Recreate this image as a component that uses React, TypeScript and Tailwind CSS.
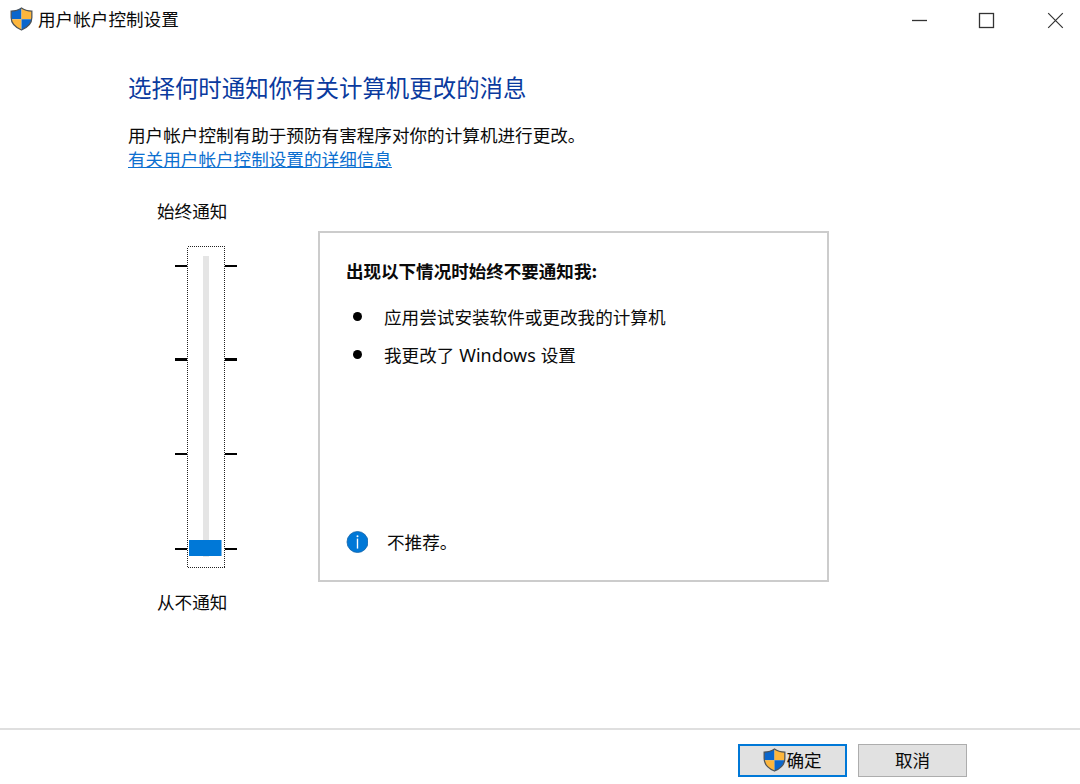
import React from "react";

function Shield({ className = "" }: { className?: string }) {
  return (
    <svg viewBox="0 0 24 25" className={`h-6 w-[23px] shrink-0 ${className}`} aria-hidden="true">
      <defs>
        <clipPath id="shield-shape">
          <path d="M12 1C9 3.2 5 4.1 1.2 4.2V11C1.2 17.2 6 21.5 12 24C18 21.5 22.8 17.2 22.8 11V4.2C19 4.1 15 3.2 12 1Z" />
        </clipPath>
      </defs>
      <g clipPath="url(#shield-shape)">
        <path fill="#0a66cc" d="M0 0H12V12.8H0Z" />
        <path fill="#fdb63c" d="M12 0H24V12.8H12Z" />
        <path fill="#fdb63c" d="M0 12.8H12V25H0Z" />
        <path fill="#0a66cc" d="M12 12.8H24V25H12Z" />
      </g>
      <path
        d="M12 1C9 3.2 5 4.1 1.2 4.2V11C1.2 17.2 6 21.5 12 24C18 21.5 22.8 17.2 22.8 11V4.2C19 4.1 15 3.2 12 1Z"
        fill="none"
        stroke="#4d5358"
        strokeWidth="1.3"
      />
    </svg>
  );
}

function TitleBar() {
  return (
    <header className="flex h-[39px] shrink-0 items-center justify-between pl-2.5 pr-4">
      <div className="flex items-center">
        <Shield className="-mt-px" />
        <h1 className="-mt-0.5 ml-[5px] text-[17.6px] leading-6">用户帐户控制设置</h1>
      </div>
      <div className="flex items-center pt-px text-[#333]">
        <button aria-label="最小化" className="mr-[50px]">
          <svg viewBox="0 0 17 17" className="block size-[17px]" fill="none" stroke="currentColor" strokeWidth="1.3">
            <path d="M1 8.5H16" />
          </svg>
        </button>
        <button aria-label="最大化" className="mr-[52px]">
          <svg viewBox="0 0 17 17" className="block size-[17px]" fill="none" stroke="currentColor" strokeWidth="1.3">
            <rect x="1.5" y="1.5" width="14" height="14" />
          </svg>
        </button>
        <button aria-label="关闭">
          <svg viewBox="0 0 17 17" className="block size-[17px]" fill="none" stroke="currentColor" strokeWidth="1.2">
            <path d="M1.2 1.2L15.8 15.8M15.8 1.2L1.2 15.8" />
          </svg>
        </button>
      </div>
    </header>
  );
}

function Ticks() {
  return (
    <div className="flex h-[322px] w-3 flex-col pt-[19px]">
      <div className="h-[2px] bg-black" />
      <div className="mt-[91px] h-[3px] bg-black" />
      <div className="mt-[92px] h-[2px] bg-black" />
      <div className="mt-[93px] h-[2px] bg-black" />
    </div>
  );
}

function LevelSlider() {
  return (
    <div className="ml-[18px] mt-[23px] flex">
      <Ticks />
      <svg viewBox="0 0 38 322" className="block h-[322px] w-[38px]" aria-label="通知级别">
        <rect x="16" y="10" width="6" height="301" fill="#e5e5e5" />
        <rect
          x="0.5"
          y="0.5"
          width="37"
          height="321"
          fill="none"
          stroke="#222"
          strokeDasharray="1 1"
          shapeRendering="crispEdges"
        />
        <rect x="2" y="294" width="32.5" height="16" fill="#0078d7" />
      </svg>
      <Ticks />
    </div>
  );
}

function Bullet({ children }: { children: React.ReactNode }) {
  return (
    <li className="flex h-[38px] items-center">
      <span className="mb-px mr-[22px] size-[9px] rounded-full bg-black" />
      <span>{children}</span>
    </li>
  );
}

export default function App() {
  return (
    <div className="flex h-[784px] w-[1080px] flex-col overflow-hidden bg-white font-['Noto_Sans_CJK_SC','Noto_Sans',sans-serif] text-[17.6px] leading-6 text-[#0a0a0a]">
      <TitleBar />
      <main className="flex grow flex-col pl-[128px]">
        <h2 className="mt-8 text-[23.45px] leading-8 text-[#0a3a9e]">选择何时通知你有关计算机更改的消息</h2>
        <p className="mt-5">用户帐户控制有助于预防有害程序对你的计算机进行更改。</p>
        <a className="w-fit text-[#0c6fd0] underline decoration-1 underline-offset-1">有关用户帐户控制设置的详细信息</a>
        <div className="mt-7 flex">
          <section className="w-[190px] pl-[29px]">
            <div>始终通知</div>
            <LevelSlider />
            <div className="mt-[22px]">从不通知</div>
          </section>
          <section className="mt-8 flex h-[351px] w-[511px] flex-col border-2 border-[#ccc] pl-[26px] pt-[26px]">
            <h3 className="text-[17.55px] font-bold">出现以下情况时始终不要通知我:</h3>
            <ul className="mt-[15px] pl-[7px]">
              <Bullet>应用尝试安装软件或更改我的计算机</Bullet>
              <Bullet>
                我更改了 <span className="ml-px mr-px font-['Noto_Sans'] text-[17.9px]">Windows</span> 设置
              </Bullet>
            </ul>
            <div className="mb-[26px] mt-auto flex items-center">
              <svg viewBox="0 0 22 22" className="mr-[19px] size-[22px]" aria-hidden="true">
                <circle cx="11.5" cy="11" r="10.5" fill="#0078d7" stroke="#1565a8" strokeWidth="0.8" />
                <path d="M11.5 7.6V17.6" stroke="#fff" strokeWidth="1.4" />
                <circle cx="11.5" cy="5.2" r="1" fill="#fff" />
              </svg>
              <span>不推荐。</span>
            </div>
          </section>
        </div>
      </main>
      <footer className="flex h-14 shrink-0 justify-end gap-[11px] border-t-2 border-[#dfdfdf] pr-[113px] pt-3.5">
        <button className="flex h-[33px] w-[109px] items-center justify-center border-2 border-[#0078d7] bg-[#e1e1e1] pb-px">
          <Shield />
          <span>确定</span>
        </button>
        <button className="flex h-[33px] w-[109px] items-center justify-center border border-[#adadad] bg-[#e1e1e1] pb-px">
          取消
        </button>
      </footer>
    </div>
  );
}
